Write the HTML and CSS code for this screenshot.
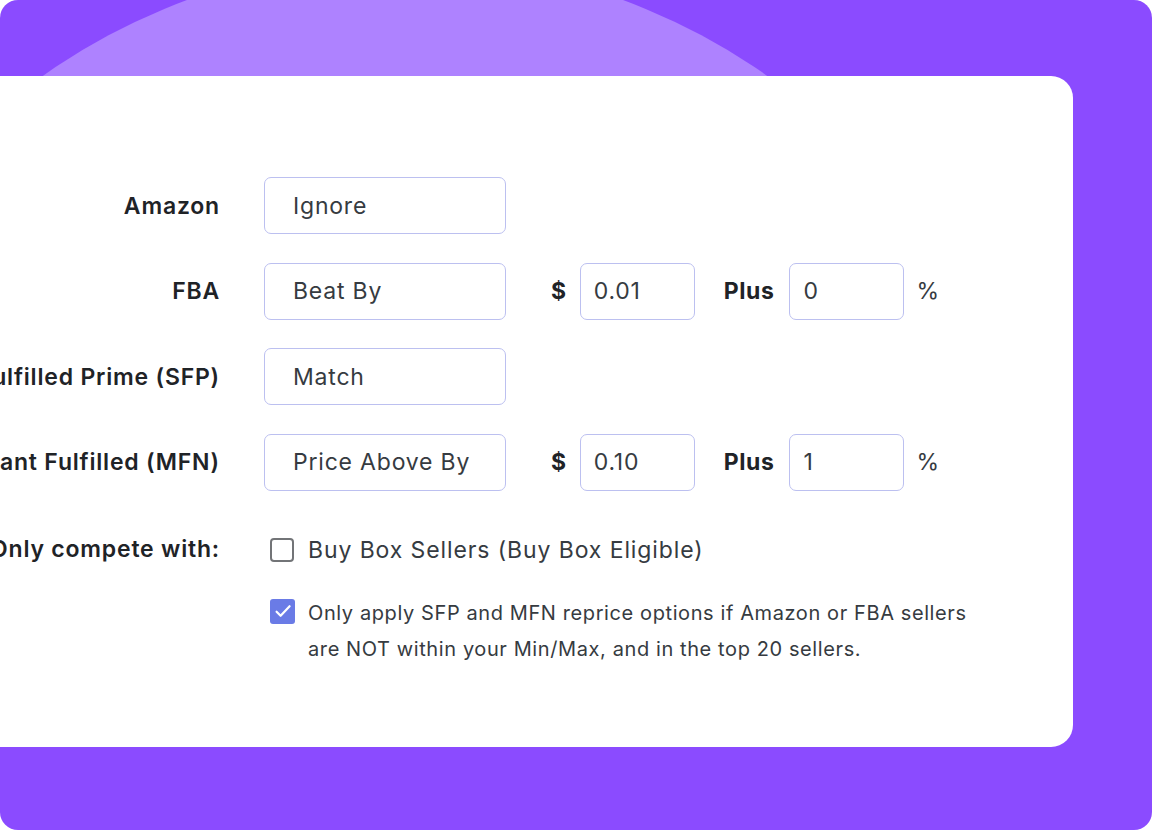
FILE: index.html
```html
<!DOCTYPE html>
<html>
<head>
<meta charset="utf-8">
<link rel="stylesheet" href="styles.css">
</head>
<body>
<div class="frame">
  <div class="blob-clip"><div class="blob"></div></div>
  <div class="card">
    <div class="form">
      <div class="label">Amazon</div>
      <div class="fields"><div class="box wide">Ignore</div></div>

      <div class="label">FBA</div>
      <div class="fields">
        <div class="box wide">Beat By</div>
        <span class="unit dollar">$</span>
        <div class="box small">0.01</div>
        <span class="unit plus">Plus</span>
        <div class="box small">0</div>
        <span class="pct">%</span>
      </div>

      <div class="label">Seller Fulfilled Prime (SFP)</div>
      <div class="fields"><div class="box wide">Match</div></div>

      <div class="label">Merchant Fulfilled (MFN)</div>
      <div class="fields">
        <div class="box wide">Price Above By</div>
        <span class="unit dollar">$</span>
        <div class="box small">0.10</div>
        <span class="unit plus">Plus</span>
        <div class="box small">1</div>
        <span class="pct">%</span>
      </div>

      <div class="label compete">Only compete with:</div>
      <div class="checks">
        <div class="check-row">
          <span class="cb"></span>
          <span class="cb-text">Buy Box Sellers (Buy Box Eligible)</span>
        </div>
        <div class="check-row note">
          <span class="cb on">
            <svg viewBox="0 0 24 24" width="22" height="22"><path d="M5 12.8l4.4 4.4L19.2 6.8" fill="none" stroke="#fff" stroke-width="2.4" stroke-linecap="round" stroke-linejoin="round"/></svg>
          </span>
          <span class="note-text">Only apply SFP and MFN reprice options if Amazon or FBA sellers<br>are NOT within your Min/Max, and in the top 20 sellers.</span>
        </div>
      </div>
    </div>
  </div>
</div>
</body>
</html>
```

FILE: styles.css
```css
html, body {
  margin: 0;
  padding: 0;
  background: #ffffff;
}

body {
  width: 1162px;
  height: 838px;
  overflow: hidden;
  font-family: Inter, "Noto Sans", sans-serif;
}

.frame {
  position: relative;
  width: 1152px;
  height: 830px;
  background: #8b4bff;
  border-radius: 18px;
  overflow: hidden;
  padding-top: 76px;
  box-sizing: border-box;
}

.blob-clip {
  position: absolute;
  left: 0;
  top: 0;
  width: 100%;
  height: 400px;
  overflow: hidden;
}

.blob {
  position: absolute;
  left: -224px;
  top: -39px;
  width: 1258px;
  height: 1258px;
  border-radius: 50%;
  background: #ae82ff;
}

.card {
  position: relative;
  margin-left: -200px;
  width: 1273px;
  height: 671px;
  background: #ffffff;
  border-radius: 22px;
  box-sizing: border-box;
  padding-top: 101px;
}

.form {
  display: grid;
  grid-template-columns: 420px 1fr;
  column-gap: 44px;
  row-gap: 28.5px;
  align-items: center;
}

.label {
  text-align: right;
  white-space: nowrap;
  font-size: 23px;
  font-weight: 600;
  color: #1f2327;
  letter-spacing: 0.8px;
}

.label.compete {
  align-self: start;
  margin-top: 15px;
  line-height: 30px;
}

.fields {
  display: flex;
  align-items: center;
  height: 57px;
}

.box {
  box-sizing: border-box;
  height: 57px;
  border: 1.5px solid #bcc0f0;
  border-radius: 7px;
  display: flex;
  align-items: center;
  font-size: 23px;
  color: #363b41;
  letter-spacing: 0.8px;
}

.box.wide {
  width: 242px;
  padding-left: 28px;
}

.box.small {
  width: 115px;
  padding-left: 13px;
}

.unit {
  font-size: 23px;
  font-weight: 700;
  color: #1f2327;
  letter-spacing: 0.6px;
}

.unit.dollar {
  margin-left: 45px;
  margin-right: 13px;
}

.unit.plus {
  margin-left: 29px;
  margin-right: 15px;
}

.pct {
  margin-left: 12px;
  font-size: 23px;
  color: #363b41;
}

.checks {
  display: flex;
  flex-direction: column;
  gap: 34px;
  margin-top: 15.5px;
}

.check-row {
  display: flex;
  align-items: center;
  padding-left: 6px;
}

.check-row.note {
  align-items: flex-start;
}

.cb {
  box-sizing: border-box;
  width: 24px;
  height: 24px;
  border: 2px solid #727477;
  border-radius: 4px;
  flex: none;
  display: flex;
  align-items: center;
  justify-content: center;
}

.cb.on {
  width: 25px;
  height: 25px;
  border: none;
  background: #6a7be6;
  border-radius: 3px;
}

.cb-text {
  margin-left: 14px;
  font-size: 23px;
  color: #363b41;
  line-height: 30px;
  letter-spacing: 0.9px;
}

.note-text {
  margin-left: 13px;
  font-size: 20px;
  line-height: 36px;
  color: #363b41;
  margin-top: -4px;
  letter-spacing: 0.6px;
}
```
